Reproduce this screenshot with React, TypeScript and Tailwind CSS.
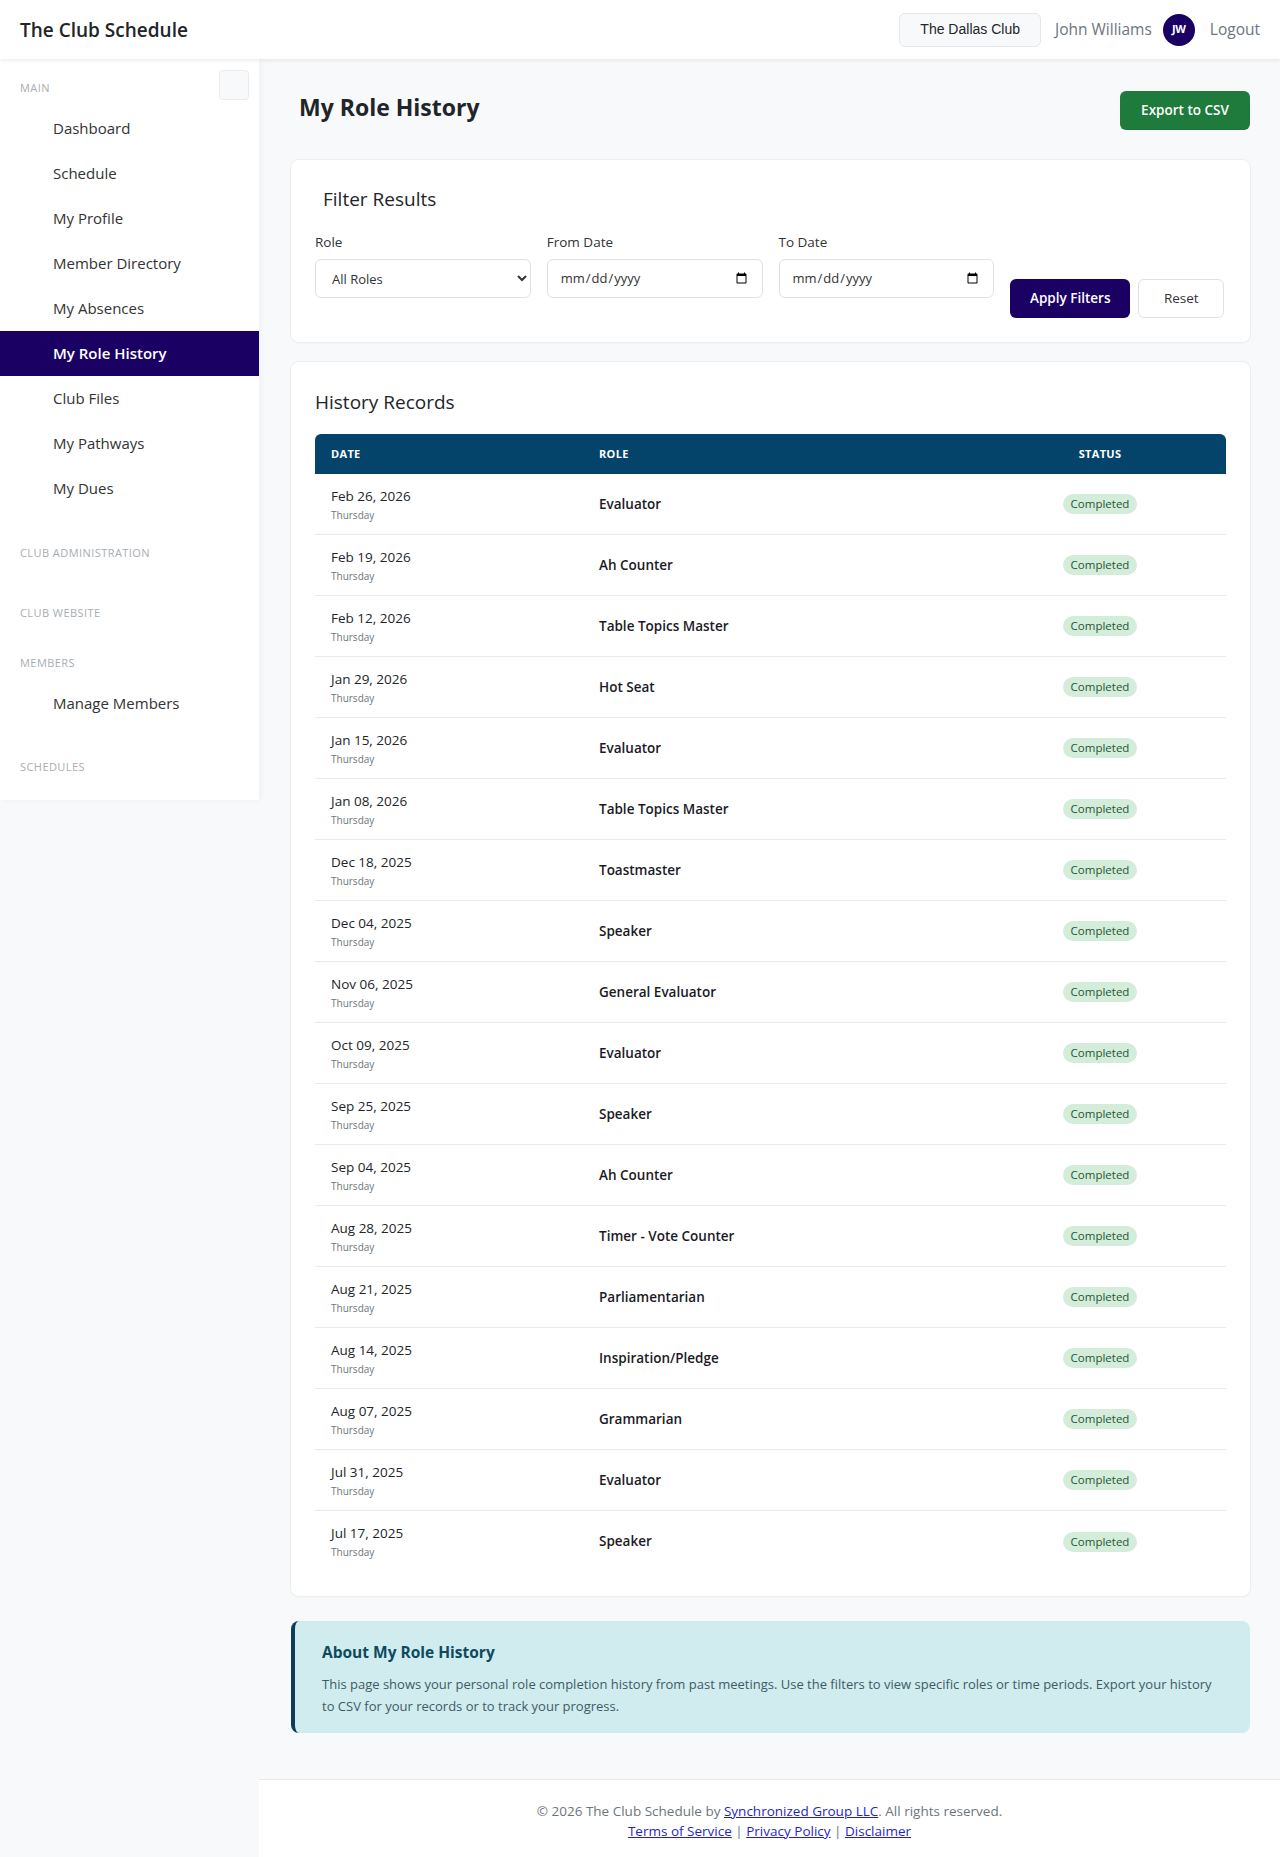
import React from 'react'

type RoleRecord = {
  date: string
  role: string
}

const records: RoleRecord[] = [
  { date: 'Feb 26, 2026', role: 'Evaluator' },
  { date: 'Feb 19, 2026', role: 'Ah Counter' },
  { date: 'Feb 12, 2026', role: 'Table Topics Master' },
  { date: 'Jan 29, 2026', role: 'Hot Seat' },
  { date: 'Jan 15, 2026', role: 'Evaluator' },
  { date: 'Jan 08, 2026', role: 'Table Topics Master' },
  { date: 'Dec 18, 2025', role: 'Toastmaster' },
  { date: 'Dec 04, 2025', role: 'Speaker' },
  { date: 'Nov 06, 2025', role: 'General Evaluator' },
  { date: 'Oct 09, 2025', role: 'Evaluator' },
  { date: 'Sep 25, 2025', role: 'Speaker' },
  { date: 'Sep 04, 2025', role: 'Ah Counter' },
  { date: 'Aug 28, 2025', role: 'Timer - Vote Counter' },
  { date: 'Aug 21, 2025', role: 'Parliamentarian' },
  { date: 'Aug 14, 2025', role: 'Inspiration/Pledge' },
  { date: 'Aug 07, 2025', role: 'Grammarian' },
  { date: 'Jul 31, 2025', role: 'Evaluator' },
  { date: 'Jul 17, 2025', role: 'Speaker' },
]

const mainNav = [
  'Dashboard',
  'Schedule',
  'My Profile',
  'Member Directory',
  'My Absences',
  'My Role History',
  'Club Files',
  'My Pathways',
  'My Dues',
]

function NavItem({ label, active = false }: { label: string; active?: boolean }) {
  return (
    <a
      href="#"
      className={
        active
          ? 'flex h-[45px] items-center bg-[#1a0063] pl-[53px] text-[15px] font-semibold text-white'
          : 'flex h-[45px] items-center pl-[53px] text-[15px] text-[#333]'
      }
    >
      {label}
    </a>
  )
}

function SectionLabel({ children, className = '' }: { children: React.ReactNode; className?: string }) {
  return (
    <p className={`pl-5 text-[11px] font-medium uppercase leading-4 tracking-[0.04em] text-[#a8adb3] ${className}`}>
      {children}
    </p>
  )
}

function Sidebar() {
  return (
    <aside className="h-[741px] w-[259px] shrink-0 bg-white pt-[11px] shadow-[2px_0_6px_rgba(0,0,0,0.04)]">
      <div className="flex items-start justify-between pr-[10px]">
        <SectionLabel className="mt-[10px]">Main</SectionLabel>
        <button className="h-[30px] w-[30px] rounded border border-[#e9ecef] bg-[#f8f9fa]" aria-label="Collapse sidebar" />
      </div>
      <nav className="mt-[6px]">
        {mainNav.map((label) => (
          <NavItem key={label} label={label} active={label === 'My Role History'} />
        ))}
      </nav>
      <SectionLabel className="mt-[34px]">Club Administration</SectionLabel>
      <SectionLabel className="mt-[44px]">Club Website</SectionLabel>
      <SectionLabel className="mt-[34px]">Members</SectionLabel>
      <nav className="mt-[10px]">
        <NavItem label="Manage Members" />
      </nav>
      <SectionLabel className="mt-[33px]">Schedules</SectionLabel>
    </aside>
  )
}

function Header() {
  return (
    <header className="relative z-10 flex h-[59px] items-center justify-between bg-white pl-5 pr-5 shadow-[0_2px_4px_rgba(0,0,0,0.07)]">
      <h1 className="pt-[2px] text-[19px] font-semibold text-[#212529]">The Club Schedule</h1>
      <div className="flex items-center">
        <button className="h-[34px] rounded-md border border-[#e3e6ea] bg-[#f8f9fa] px-5 font-['Liberation_Sans',Arial,sans-serif] text-[14px] text-[#212529]">
          The Dallas Club
        </button>
        <span className="ml-[14px] text-[15.5px] text-[#6c757d]">John Williams</span>
        <span className="ml-[11px] flex h-8 w-8 items-center justify-center rounded-full bg-[#1a0063] text-[11px] font-bold tracking-[-0.03em] text-white">
          JW
        </span>
        <a href="#" className="ml-[15px] text-[15.5px] text-[#6c757d]">
          Logout
        </a>
      </div>
    </header>
  )
}

const cardClass =
  'rounded-lg bg-white p-6 shadow-[0_0_0_1px_#eceef1,0_1px_3px_rgba(0,0,0,0.05)]'

function FilterCard() {
  return (
    <section className={cardClass}>
      <h3 className="pl-[8px] text-[19px] font-medium leading-[30px] text-[#212529]">Filter Results</h3>
      <div className="mt-[18px] grid grid-cols-4 items-end gap-4">
        <div className="pb-5">
          <label className="block text-[13.5px] font-medium leading-5 text-[#333]">Role</label>
          <select className="mt-[7px] h-[39px] w-full rounded-md border border-[#dee2e6] bg-white px-3 text-[13px] text-[#333]">
            <option>All Roles</option>
          </select>
        </div>
        <div className="pb-5">
          <label className="block text-[13.5px] font-medium leading-5 text-[#333]">From Date</label>
          <input
            type="date"
            className="mt-[7px] h-[39px] w-full rounded-md border border-[#dee2e6] bg-white px-3 text-[13px] text-[#333]"
          />
        </div>
        <div className="pb-5">
          <label className="block text-[13.5px] font-medium leading-5 text-[#333]">To Date</label>
          <input
            type="date"
            className="mt-[7px] h-[39px] w-full rounded-md border border-[#dee2e6] bg-white px-3 text-[13px] text-[#333]"
          />
        </div>
        <div className="flex gap-2">
          <button className="h-[39px] w-[120px] rounded-md bg-[#1a0063] text-[13.5px] font-semibold text-white">
            Apply Filters
          </button>
          <button className="h-[39px] w-[86px] rounded-md border border-[#dee2e6] bg-white text-[13.5px] text-[#333]">
            Reset
          </button>
        </div>
      </div>
    </section>
  )
}

function HistoryCard() {
  return (
    <section className={`mt-5 ${cardClass}`}>
      <h3 className="text-[19px] font-medium leading-8 text-[#212529]">History Records</h3>
      <div className="mt-4">
        <div className="grid h-10 grid-cols-[268px_391px_1fr] items-center rounded-t-md bg-[#04446b] text-[11px] font-bold uppercase tracking-[0.03em] text-white">
          <span className="pl-4">Date</span>
          <span className="pl-4">Role</span>
          <span className="text-center">Status</span>
        </div>
        {records.map((record, i) => (
          <div
            key={record.date}
            className={
              i === records.length - 1
                ? 'grid h-[61px] grid-cols-[268px_391px_1fr] items-center'
                : 'grid h-[61px] grid-cols-[268px_391px_1fr] items-center border-b border-[#e9ecef]'
            }
          >
            <div className="pl-4">
              <p className="text-[13.5px] leading-5 text-[#212529]">{record.date}</p>
              <p className="mt-[1px] text-[10px] leading-4 text-[#6c757d]">Thursday</p>
            </div>
            <p className="pl-4 text-[13.5px] font-semibold text-[#1a1a26]">{record.role}</p>
            <div className="flex justify-center">
              <span className="rounded-full bg-[#d4eddb] px-2 py-[2px] text-[11.5px] leading-4 text-[#1e5631]">
                Completed
              </span>
            </div>
          </div>
        ))}
      </div>
    </section>
  )
}

function AboutBox() {
  return (
    <section className="mt-[25px] rounded-lg border-l-4 border-[#0b3d5c] bg-[#d1ecef] pb-4 pl-[27px] pr-8 pt-[19px]">
      <h4 className="text-[15.5px] font-bold leading-6 text-[#0c4a5e]">About My Role History</h4>
      <p className="mt-[9px] text-[13px] leading-[22px] text-[#3d5a66]">
        This page shows your personal role completion history from past meetings. Use the filters to view specific roles
        or time periods. Export your history to CSV for your records or to track your progress.
      </p>
    </section>
  )
}

function Footer() {
  return (
    <footer className="mt-[46px] border-t border-[#e6e8eb] bg-white pb-[18px] pt-[21px] text-center text-[13.5px] leading-5 text-[#6c757d]">
      <p>
        © 2026 The Club Schedule by{' '}
        <a href="#" className="text-[#1f1fce] underline">
          Synchronized Group LLC
        </a>
        . All rights reserved.
      </p>
      <p>
        <a href="#" className="text-[#1f1fce] underline">
          Terms of Service
        </a>{' '}
        |{' '}
        <a href="#" className="text-[#1f1fce] underline">
          Privacy Policy
        </a>{' '}
        |{' '}
        <a href="#" className="text-[#1f1fce] underline">
          Disclaimer
        </a>
      </p>
    </footer>
  )
}

export default function App() {
  return (
    <div className="min-h-[1857px] bg-[#f8f9fb] font-['Open_Sans','Noto_Sans',sans-serif]">
      <Header />
      <div className="flex">
        <Sidebar />
        <main className="flex min-w-0 flex-1 flex-col">
          <div className="pl-8 pr-[30px] pt-8">
            <div className="flex items-start justify-between">
              <h2 className="pl-2 text-[23px] font-bold leading-[32px] text-[#212529]">My Role History</h2>
              <button className="h-[39px] w-[130px] rounded-md bg-[#1e7b3c] text-[13.5px] font-semibold text-white">
                Export to CSV
              </button>
            </div>
            <div className="mt-[30px]">
              <FilterCard />
              <HistoryCard />
              <AboutBox />
            </div>
          </div>
          <Footer />
        </main>
      </div>
    </div>
  )
}
